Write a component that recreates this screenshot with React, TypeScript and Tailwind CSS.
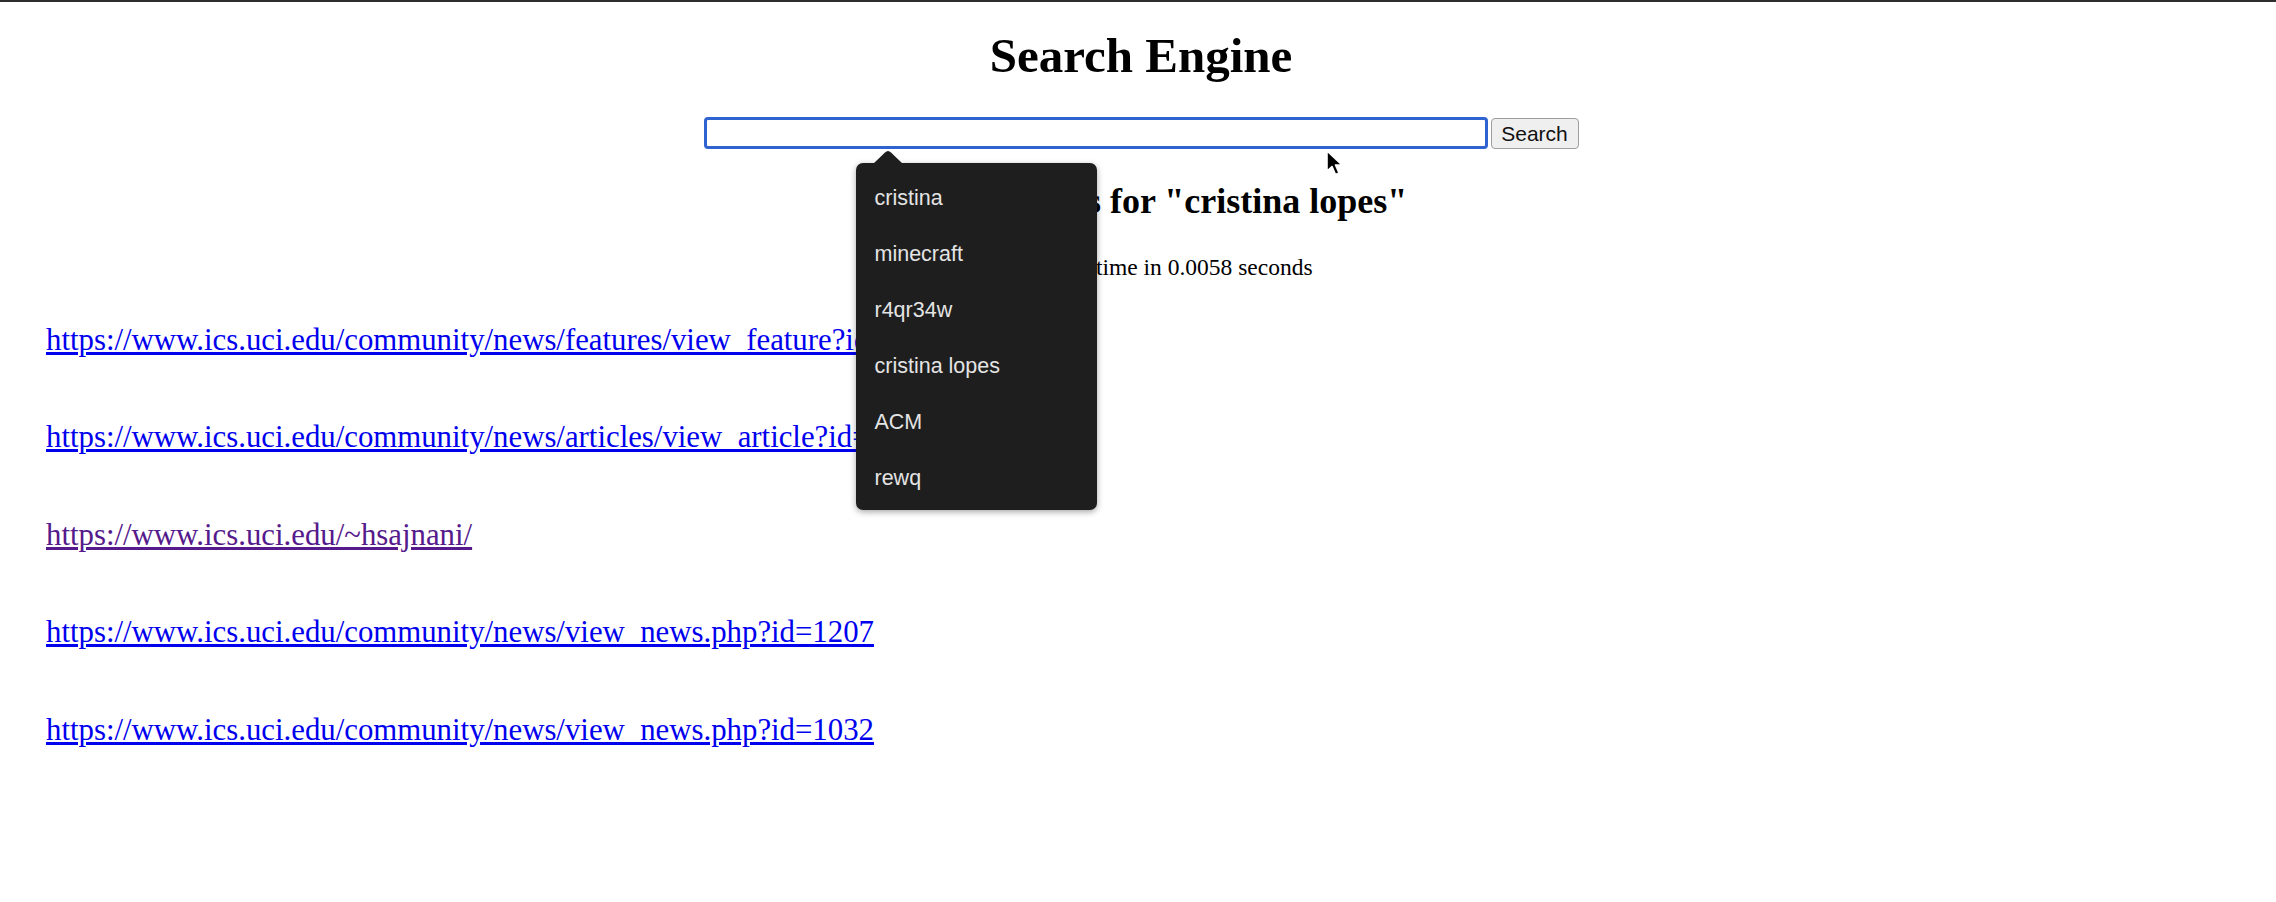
const suggestions = ['cristina', 'minecraft', 'r4qr34w', 'cristina lopes', 'ACM', 'rewq']

const results = [
  { url: 'https://www.ics.uci.edu/community/news/features/view_feature?id=103', visited: false },
  { url: 'https://www.ics.uci.edu/community/news/articles/view_article?id=210', visited: false },
  { url: 'https://www.ics.uci.edu/~hsajnani/', visited: true },
  { url: 'https://www.ics.uci.edu/community/news/view_news.php?id=1207', visited: false },
  { url: 'https://www.ics.uci.edu/community/news/view_news.php?id=1032', visited: false },
]

function Suggestions() {
  return (
    <div className="absolute left-[152px] top-[33px] z-10 w-[241px]">
      <svg width="30" height="14" viewBox="0 0 30 14" className="ml-[17px] block">
        <path d="M0 14 L12 2.5 Q15 -0.5 18 2.5 L30 14 Z" fill="#1e1e1e" />
      </svg>
      <ul className="-mt-px h-[347px] rounded-[7px] bg-[#1e1e1e] pt-[7px] pb-[4px] shadow-[0_2px_6px_rgba(0,0,0,0.35)]">
        {suggestions.map((s) => (
          <li
            key={s}
            className="flex h-[56px] items-center pl-[19px] font-['Liberation_Sans',Arial,sans-serif] text-[21.5px] text-[#e4e4e4]"
          >
            {s}
          </li>
        ))}
      </ul>
    </div>
  )
}

function Cursor() {
  return (
    <svg
      width="20"
      height="28"
      viewBox="0 0 20 28"
      className="pointer-events-none absolute left-[1325px] top-[147px] z-20"
    >
      <path
        d="M2 2 L2 22 L7 17.5 L10.5 25.5 L14 24 L10.5 16 L17 16 Z"
        fill="#000"
        stroke="#fff"
        strokeWidth="1.6"
        strokeLinejoin="round"
      />
    </svg>
  )
}

export default function App() {
  return (
    <div className="relative min-h-[902px] border-t-2 border-[#2d2e30] bg-white font-['Liberation_Serif','Times_New_Roman',serif] text-black">
      <div className="pl-[6px]">
        <h1 className="mt-[27px] text-center text-[49px] font-bold leading-[54px]">Search Engine</h1>

        <div className="mt-[34px] flex justify-center gap-[3px]">
          <div className="relative">
            <input
              type="text"
              className="block h-[32px] w-[784px] rounded-[4px] border-[3px] border-[#2f64d0] bg-white outline-none"
            />
            <Suggestions />
          </div>
          <button className="mt-px h-[31px] w-[88px] rounded-[4px] border border-[#9e9e9e] bg-[#efefef] font-['Liberation_Sans',Arial,sans-serif] text-[21px] leading-none text-[#111]">
            Search
          </button>
        </div>

        <h2 className="mt-[32px] text-center text-[36px] font-bold leading-[40px]">
          Search Results for "cristina lopes"
        </h2>
        <p className="mt-[32px] text-center text-[23.5px] leading-[28px]">Server query time in 0.0058 seconds</p>
      </div>

      <div className="mt-[40.5px] flex flex-col gap-[61.5px] pl-[46px]">
        {results.map((r) => (
          <div key={r.url} className="text-[30.8px] leading-[36px]">
            <a
              href="#"
              className={`underline ${r.visited ? 'text-[#551a8b]' : 'text-[#0000ee]'}`}
            >
              {r.url}
            </a>
          </div>
        ))}
      </div>

      <Cursor />
    </div>
  )
}
